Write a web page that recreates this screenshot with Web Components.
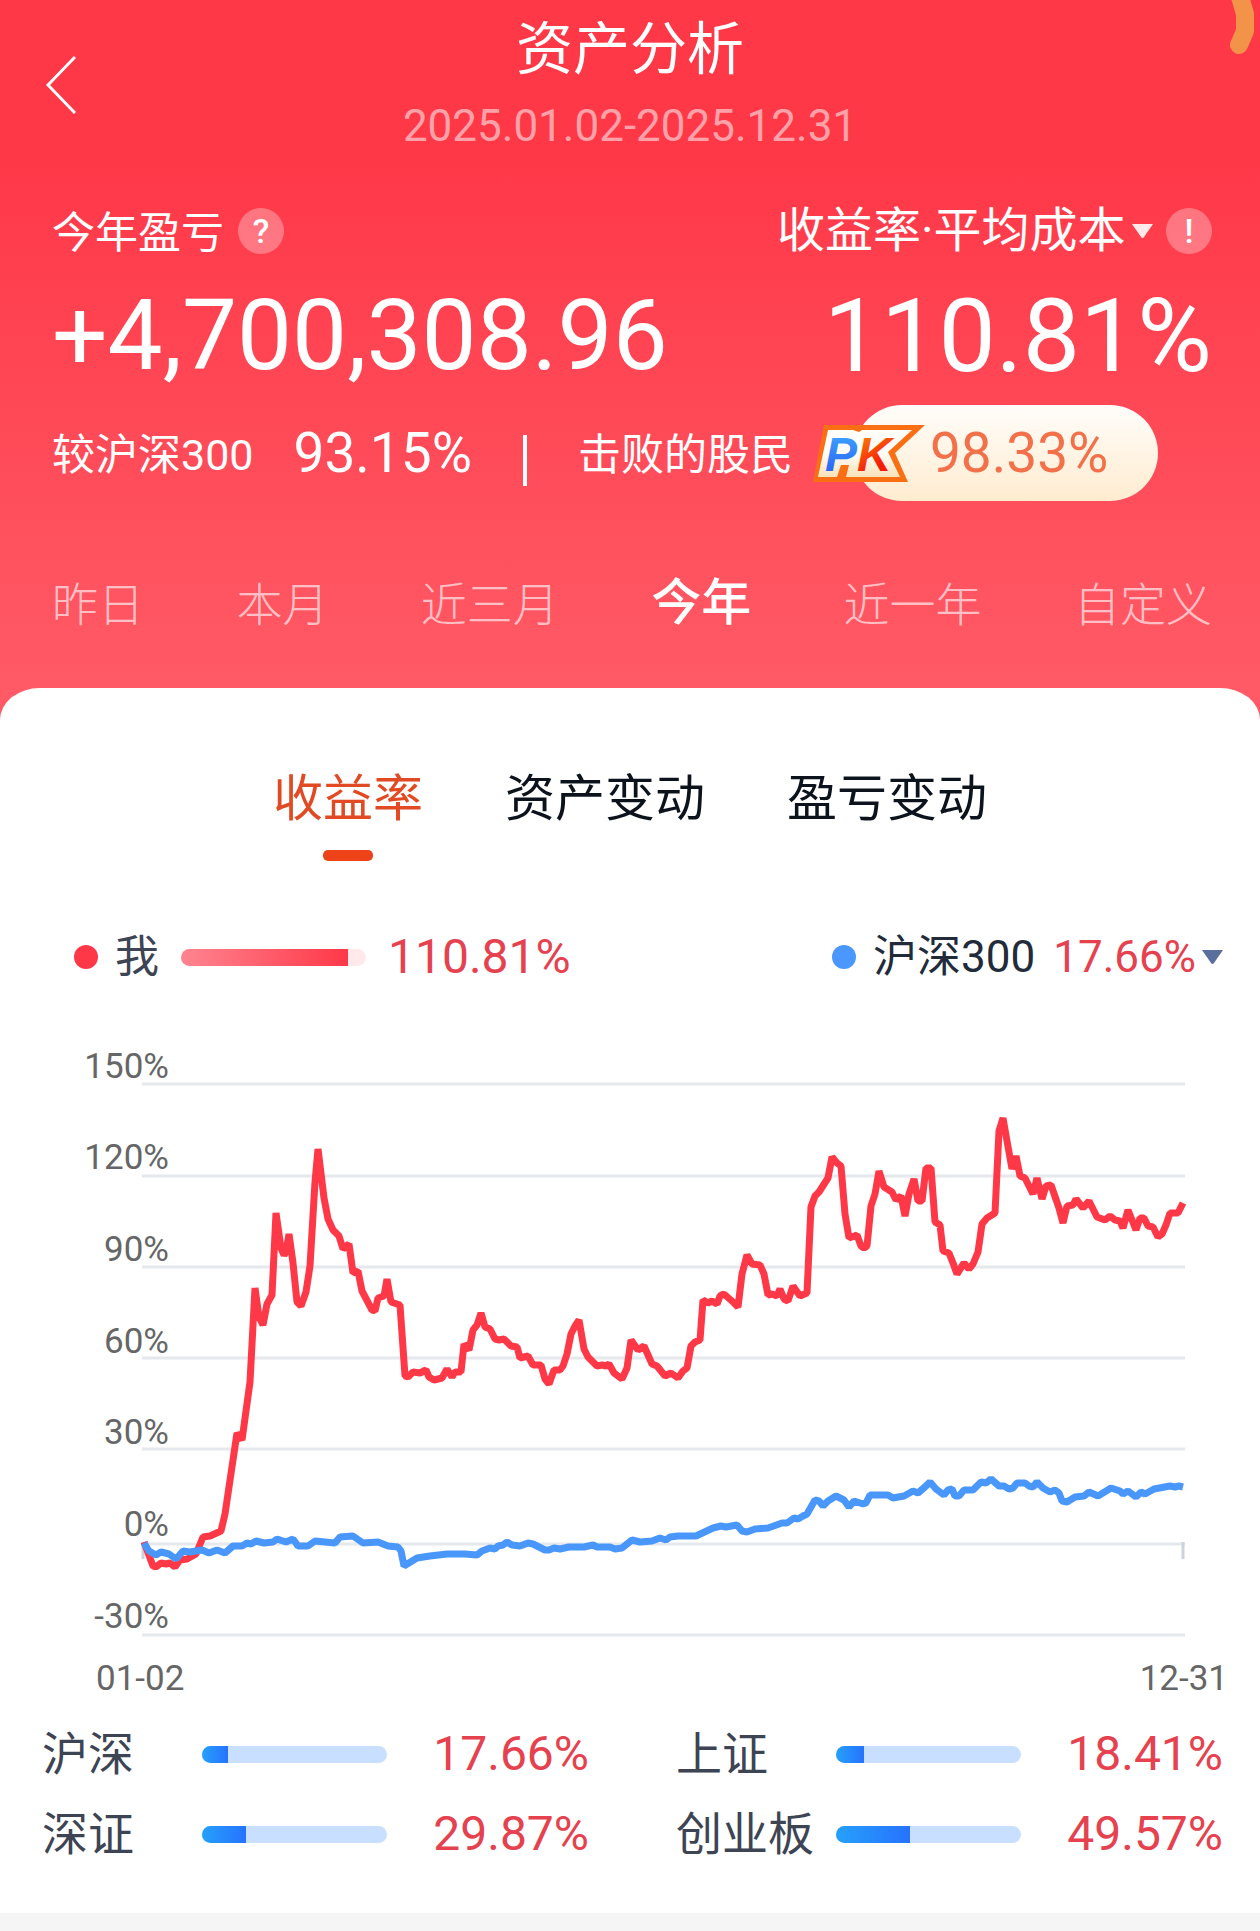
<!DOCTYPE html>
<html lang="zh-CN">
<head>
<meta charset="UTF-8">
<meta name="viewport" content="width=device-width, initial-scale=1">
<title>资产分析</title>
<style>
  body {
    margin: 0;
    background: #f5f5f5;
    color: #3d4453;
    font-family: Roboto, "Noto Sans CJK SC", sans-serif;
    font-size: 44px;
    line-height: 56px;
  }
</style>
</head>
<body>
<asset-page>
  <page-head slot="head" heading="资产分析" range="2025.01.02-2025.12.31"></page-head>
  <profit-summary slot="head"></profit-summary>
  <period-tabs slot="head" items="昨日,本月,近三月,今年,近一年,自定义" current="今年"></period-tabs>

  <view-tabs items="收益率,资产变动,盈亏变动" current="收益率"></view-tabs>
  <chart-legend></chart-legend>
  <return-chart></return-chart>
  <index-list>
    <index-item name="沪深" value="17.66%" fill="14"></index-item>
    <index-item name="上证" value="18.41%" fill="15"></index-item>
    <index-item name="深证" value="29.87%" fill="24"></index-item>
    <index-item name="创业板" value="49.57%" fill="40"></index-item>
  </index-list>
</asset-page>

<script>
(() => {
  const define = (name, render) => {
    if (customElements.get(name)) {
      return;
    }
    customElements.define(name, class extends HTMLElement {
      constructor() {
        super();
        this.attachShadow({ mode: "open" });
      }
      connectedCallback() {
        this.shadowRoot.innerHTML = render(this);
      }
    });
  };

  const reset = `
    *, *::before, *::after { box-sizing: border-box; }
    button, select {
      margin: 0;
      padding: 0;
      border: none;
      background: none;
      color: inherit;
      font: inherit;
      cursor: pointer;
    }
  `;

  define("asset-page", () => `
    <style>
      :host { display: block; }
      .top {
        position: relative;
        padding: 18px 48px 89px 52px;
        background: linear-gradient(180deg, #ff3848 0, #ff3848 22%, #ff5a66 94%);
        color: #fff;
      }
      .brush {
        position: absolute;
        top: 0;
        right: 0;
      }
      .card {
        position: relative;
        margin-top: -40px;
        padding: 79px 0 51px;
        border-radius: 40px 40px 0 0 / 32px 32px 0 0;
        background: #fff;
      }
    </style>
    <header class="top">
      <slot name="head"></slot>
      <svg class="brush" width="40" height="60" viewBox="0 0 40 60" aria-hidden="true">
        <path d="M18 -8 21 0 25 14V31L19 45" fill="none" stroke="#f39349" stroke-width="18" stroke-linecap="round" stroke-linejoin="round"/>
      </svg>
    </header>
    <main class="card"><slot></slot></main>
  `);

  define("page-head", (el) => `
    <style>
      ${reset}
      :host {
        display: grid;
        grid-template-columns: 60px 1fr 60px;
        align-items: center;
        margin: 0 -2px 0 -6px;
      }
      .back { display: flex; height: 80px; align-items: center; }
      .titles {
        display: flex;
        flex-direction: column;
        gap: 18px;
        text-align: center;
      }
      h1 { margin: 0; font-size: 57px; font-weight: 400; line-height: 64px; }
      time { line-height: 52px; color: rgba(255, 255, 255, 0.55); }
    </style>
    <button class="back" type="button" aria-label="返回">
      <svg width="30" height="60" viewBox="0 0 30 60" fill="none" stroke="#fff" stroke-width="3">
        <path d="M29 2 2 30 29 58"/>
      </svg>
    </button>
    <div class="titles">
      <h1>${el.getAttribute("heading")}</h1>
      <time>${el.getAttribute("range")}</time>
    </div>
  `);

  define("hint-dot", () => `
    <style>
      ${reset}
      :host { display: inline-flex; }
      button {
        width: 46px;
        height: 46px;
        border-radius: 50%;
        background: rgba(255, 255, 255, 0.3);
        font-size: 34px;
        font-weight: 500;
        line-height: 46px;
        text-align: center;
      }
    </style>
    <button type="button"><slot></slot></button>
  `);

  define("pk-badge", () => `
    <style>
      :host { display: block; }
      svg { display: block; }
      text { font: italic 700 48px "Liberation Sans", sans-serif; }
    </style>
    <svg width="112" height="57" viewBox="0 0 112 57">
      <defs>
        <linearGradient id="p" x1="0" y1="0" x2="0" y2="1">
          <stop offset="0.2" stop-color="#3a9bff"/><stop offset="0.8" stop-color="#2c68f5"/>
        </linearGradient>
        <linearGradient id="k" x1="0" y1="0" x2="0.4" y2="1">
          <stop offset="0.2" stop-color="#f8780c"/><stop offset="0.8" stop-color="#f71b05"/>
        </linearGradient>
        <linearGradient id="cream" x1="0" y1="0" x2="0" y2="1">
          <stop offset="0.5" stop-color="#fffdf8"/><stop offset="1" stop-color="#f8e2b8"/>
        </linearGradient>
      </defs>
      <path d="M11 0H112L82 28 95 57H0Z" fill="#fa6f14"/>
      <path d="M15 5H40L46 7 49 5H99L75 27 87 52H33L36 40H28L24 52H5Z" fill="url(#cream)"/>
      <text x="12" y="46" fill="url(#p)">P</text>
      <text x="44" y="46" fill="url(#k)">K</text>
    </svg>
  `);

  define("profit-summary", () => `
    <style>
      ${reset}
      :host { display: block; margin-top: 49px; }
      .row { display: flex; align-items: center; justify-content: space-between; }
      .label { display: flex; align-items: center; gap: 14px; }
      .text { padding-top: 4px; font-size: 43px; }
      .cost { display: flex; align-items: center; }
      select {
        appearance: none;
        font-size: 48px;
        line-height: 56px;
        height: 56px;
      }
      option { color: #222; }
      .cost svg { margin: 0 13px 0 6px; }
      .total { margin: 25px 0 19px; font-size: 98px; line-height: 100px; }
      .total .ratio { font-size: 102px; }
      .rank { justify-content: flex-start; }
      .value { font-size: 55px; }
      .rank .value { margin-left: 40px; }
      .bar { width: 4px; height: 51px; margin: 14px 51px 0; background: #fff; }
      .pill {
        display: flex;
        align-items: center;
        height: 96px;
        margin-left: 61px;
        padding-right: 50px;
        border-radius: 48px;
        background: linear-gradient(180deg, #fffdfa, #ffecd0);
        color: #f2714a;
      }
      .rank .pill .value { margin-left: 5px; }
      pk-badge { margin-left: -41px; }
    </style>
    <div class="row">
      <div class="label"><span class="text">今年盈亏</span><hint-dot aria-label="盈亏说明">?</hint-dot></div>
      <div class="cost">
        <select aria-label="收益率算法"><option>收益率·平均成本</option></select>
        <svg width="21" height="14" viewBox="0 0 21 14" aria-hidden="true"><path d="M0 0H21L12 13Q10.500 15 9 13Z" fill="#ffe9eb"/></svg>
        <hint-dot aria-label="收益率说明">!</hint-dot>
      </div>
    </div>
    <div class="row total"><span>+4,700,308.96</span><span class="ratio">110.81%</span></div>
    <div class="row rank">
      <span class="text">较沪深300</span><span class="value">93.15%</span>
      <i class="bar"></i>
      <span class="text">击败的股民</span>
      <div class="pill"><pk-badge></pk-badge><span class="value">98.33%</span></div>
    </div>
  `);

  const tabButtons = (el) => el.getAttribute("items").split(",").map((item) => `
    <button type="button" role="tab" aria-selected="${item === el.getAttribute("current")}">${item}</button>
  `).join("");

  define("period-tabs", (el) => `
    <style>
      ${reset}
      :host { display: block; margin-top: 70px; }
      nav { display: flex; align-items: flex-start; justify-content: space-between; }
      button {
        font-size: 46px;
        font-weight: 300;
        line-height: 68px;
        color: rgba(255, 255, 255, 0.65);
      }
      button[aria-selected="true"] { font-size: 50px; font-weight: 500; line-height: 64px; color: #fff; }
    </style>
    <nav role="tablist">${tabButtons(el)}</nav>
  `);

  define("view-tabs", (el) => `
    <style>
      ${reset}
      :host { display: block; }
      nav { display: flex; justify-content: center; gap: 82px; }
      button {
        display: flex;
        flex-direction: column;
        align-items: center;
        gap: 19px;
        font-size: 50px;
        line-height: 64px;
        color: #0c131c;
      }
      button::after {
        content: "";
        width: 50px;
        height: 11px;
        border-radius: 5px;
      }
      button[aria-selected="true"] { color: #e14a22; }
      button[aria-selected="true"]::after { background: #ee4218; }
    </style>
    <nav role="tablist">${tabButtons(el)}</nav>
  `);

  define("rate-bar", (el) => `
    <style>
      :host { display: block; flex: none; width: 185px; }
      .track {
        height: 17px;
        border-radius: 9px;
        overflow: hidden;
        background: var(--track, #c8dfff);
      }
      .fill {
        width: ${el.getAttribute("fill")}%;
        height: 100%;
        background: linear-gradient(90deg, var(--from, #26a0fb), var(--to, #2673fe));
      }
    </style>
    <div class="track"><div class="fill"></div></div>
  `);

  define("chart-legend", () => `
    <style>
      ${reset}
      :host {
        display: flex;
        align-items: center;
        justify-content: space-between;
        margin-top: 68px;
        padding: 0 37px 0 74px;
      }
      .me, .base { display: flex; align-items: center; }
      .dot { width: 24px; height: 24px; margin-right: 17px; border-radius: 50%; background: #ff3848; }
      .base .dot { background: #4a97ff; }
      rate-bar { --track: #ffe9eb; --from: #ff8490; --to: #ff3848; margin: 0 22px; }
      .rate { color: #e6414f; }
      .me .rate { font-size: 48px; }
      .base { color: #222b3a; }
      .base .rate { margin: 0 6px 0 18px; }
    </style>
    <div class="me">
      <i class="dot"></i><span>我</span>
      <rate-bar fill="90"></rate-bar>
      <span class="rate">110.81%</span>
    </div>
    <button class="base" type="button" aria-haspopup="listbox">
      <i class="dot"></i><span>沪深300</span><span class="rate">17.66%</span>
      <svg width="21" height="14" viewBox="0 0 21 14" aria-hidden="true"><path d="M0 0H21L12 13Q10.500 15 9 13Z" fill="#5b6f9c"/></svg>
    </button>
  `);

  // [label, baseline of the label, y of the grid line]
  const grid = [
    ["150%", 1079, 1085],
    ["120%", 1170, 1177],
    ["90%", 1262, 1268],
    ["60%", 1354, 1359],
    ["30%", 1445, 1450],
    ["0%", 1537, 1545],
    ["-30%", 1629, 1636]
  ];

  const mine = `144,1543 153,1567 156,1568 161,1564 166,1565 170,1564 175,1568 180,1561 187,1560 196,1555
    203,1538 210,1537 221,1532 225,1515 237,1434 242,1441 250,1383 255,1289 259,1318 263,1326 267,1305 272,1296
    276,1214 281,1249 284,1256 286,1253 289,1235 293,1264 297,1303 301,1307 306,1293 310,1267 315,1183 318,1150
    324,1199 328,1220 333,1231 339,1237 343,1250 349,1245 353,1274 358,1272 362,1292 372,1311 375,1312 378,1299
    384,1297 387,1280 391,1303 400,1306 405,1377 408,1378 413,1373 420,1374 426,1371 429,1378 434,1381 442,1379
    447,1370 452,1378 455,1373 461,1373 464,1345 469,1351 473,1331 477,1326 481,1314 485,1328 490,1330 495,1340
    499,1341 504,1340 511,1347 517,1348 520,1359 528,1357 533,1366 541,1366 545,1380 549,1385 554,1371 560,1371
    563,1367 567,1355 571,1335 575,1327 579,1321 584,1350 588,1358 597,1367 602,1366 606,1367 609,1365 614,1374
    622,1380 627,1369 631,1341 638,1351 644,1347 652,1365 657,1367 665,1377 671,1374 678,1379 683,1372 687,1369
    691,1347 695,1343 700,1341 703,1301 708,1304 712,1302 717,1305 720,1297 724,1295 733,1303 738,1308 742,1275
    747,1256 752,1265 760,1266 764,1275 768,1296 772,1295 777,1297 780,1290 784,1300 788,1302 793,1287 800,1297
    807,1294 811,1208 815,1197 819,1193 828,1179 832,1158 837,1164 841,1167 845,1215 849,1239 857,1236 861,1247
    864,1249 867,1247 871,1207 875,1195 879,1172 884,1188 892,1193 896,1201 901,1197 905,1217 909,1195 914,1180
    918,1202 922,1202 926,1169 931,1169 935,1223 940,1226 943,1252 949,1254 953,1264 957,1275 964,1264 969,1270
    973,1265 978,1253 982,1225 987,1219 995,1214 999,1132 1003,1119 1007,1142 1012,1170 1016,1157 1020,1177
    1025,1179 1033,1195 1037,1179 1042,1200 1046,1187 1051,1186 1059,1209 1063,1224 1067,1207 1073,1206
    1076,1200 1083,1209 1089,1202 1097,1218 1105,1221 1110,1217 1115,1221 1120,1222 1123,1229 1128,1211
    1136,1231 1140,1219 1144,1219 1148,1227 1153,1228 1158,1238 1162,1235 1166,1226 1170,1214 1178,1214 1183,1204`;

  const index = `144,1544 149,1552 156,1556 161,1553 169,1555 176,1560 183,1552 190,1553 202,1551 209,1554 217,1551
    225,1554 233,1547 242,1547 247,1544 251,1545 256,1542 264,1544 273,1543 277,1540 286,1543 293,1540 298,1547
    308,1547 315,1542 335,1544 340,1538 353,1537 363,1544 378,1543 388,1547 398,1548 401,1552 404,1567 417,1559
    430,1557 447,1555 465,1555 477,1556 482,1552 490,1549 495,1550 498,1547 503,1546 507,1543 512,1546 520,1547
    528,1544 533,1545 545,1551 549,1551 554,1549 560,1550 569,1548 584,1548 593,1546 597,1548 610,1548 615,1550
    622,1549 627,1545 632,1541 640,1543 652,1542 660,1539 666,1541 670,1538 678,1537 696,1537 713,1529 721,1527
    726,1528 737,1526 742,1532 747,1533 755,1530 768,1529 782,1524 787,1524 794,1519 798,1520 803,1517 807,1515
    815,1501 819,1502 823,1507 828,1502 836,1497 844,1501 849,1508 854,1502 863,1505 866,1504 870,1496 888,1496
    893,1499 904,1497 913,1492 918,1494 926,1487 930,1483 936,1490 944,1496 948,1491 952,1490 955,1497 959,1497
    964,1491 973,1491 981,1483 986,1484 991,1480 999,1487 1004,1487 1009,1490 1013,1489 1017,1484 1025,1484
    1029,1487 1033,1488 1037,1483 1043,1489 1050,1493 1055,1491 1059,1494 1062,1502 1067,1503 1075,1498 1084,1497
    1089,1493 1098,1497 1111,1489 1120,1492 1123,1495 1128,1492 1136,1498 1141,1493 1145,1495 1154,1490
    1170,1487 1175,1488 1179,1487 1183,1488`;

  define("return-chart", () => `
    <style>
      :host { display: block; margin-top: 44px; }
      svg { display: block; width: 100%; height: auto; }
      text { font-size: 35px; fill: #666; }
      .end { text-anchor: end; }
      .grid line { stroke: #e5e8ec; stroke-width: 3; }
      .tick { stroke: #cdd3de; stroke-width: 3; }
      polyline { fill: none; stroke-width: 7; stroke-linejoin: bevel; }
    </style>
    <svg viewBox="0 1030 1260 670" role="img" aria-label="收益率走势">
      <g class="grid">
        ${grid.map(([, , y]) => `<line x1="142" x2="1185" y1="${y}" y2="${y}"/>`).join("")}
      </g>
      <path class="tick" d="M143 1543V1560M1183 1543V1560"/>
      ${grid.map(([label, y]) => `<text class="end" x="169" y="${y}">${label}</text>`).join("")}
      <polyline points="${mine}" stroke="#ff3848"/>
      <polyline points="${index}" stroke="#4a97fc"/>
      <text x="96" y="1691">01-02</text>
      <text class="end" x="1228" y="1691">12-31</text>
    </svg>
  `);

  define("index-list", () => `
    <style>
      :host {
        display: grid;
        grid-template-columns: 1fr 1fr;
        gap: 24px 87px;
        margin-top: 27px;
        padding: 0 37px 0 42px;
      }
    </style>
    <slot></slot>
  `);

  define("index-item", (el) => `
    <style>
      :host { display: flex; align-items: center; }
      .name { width: 160px; flex: none; font-size: 46px; }
      .rate { flex: 1; font-size: 48px; text-align: right; color: #e6414f; }
    </style>
    <span class="name">${el.getAttribute("name")}</span>
    <rate-bar fill="${el.getAttribute("fill")}"></rate-bar>
    <span class="rate">${el.getAttribute("value")}</span>
  `);
})();
</script>
</body>
</html>
